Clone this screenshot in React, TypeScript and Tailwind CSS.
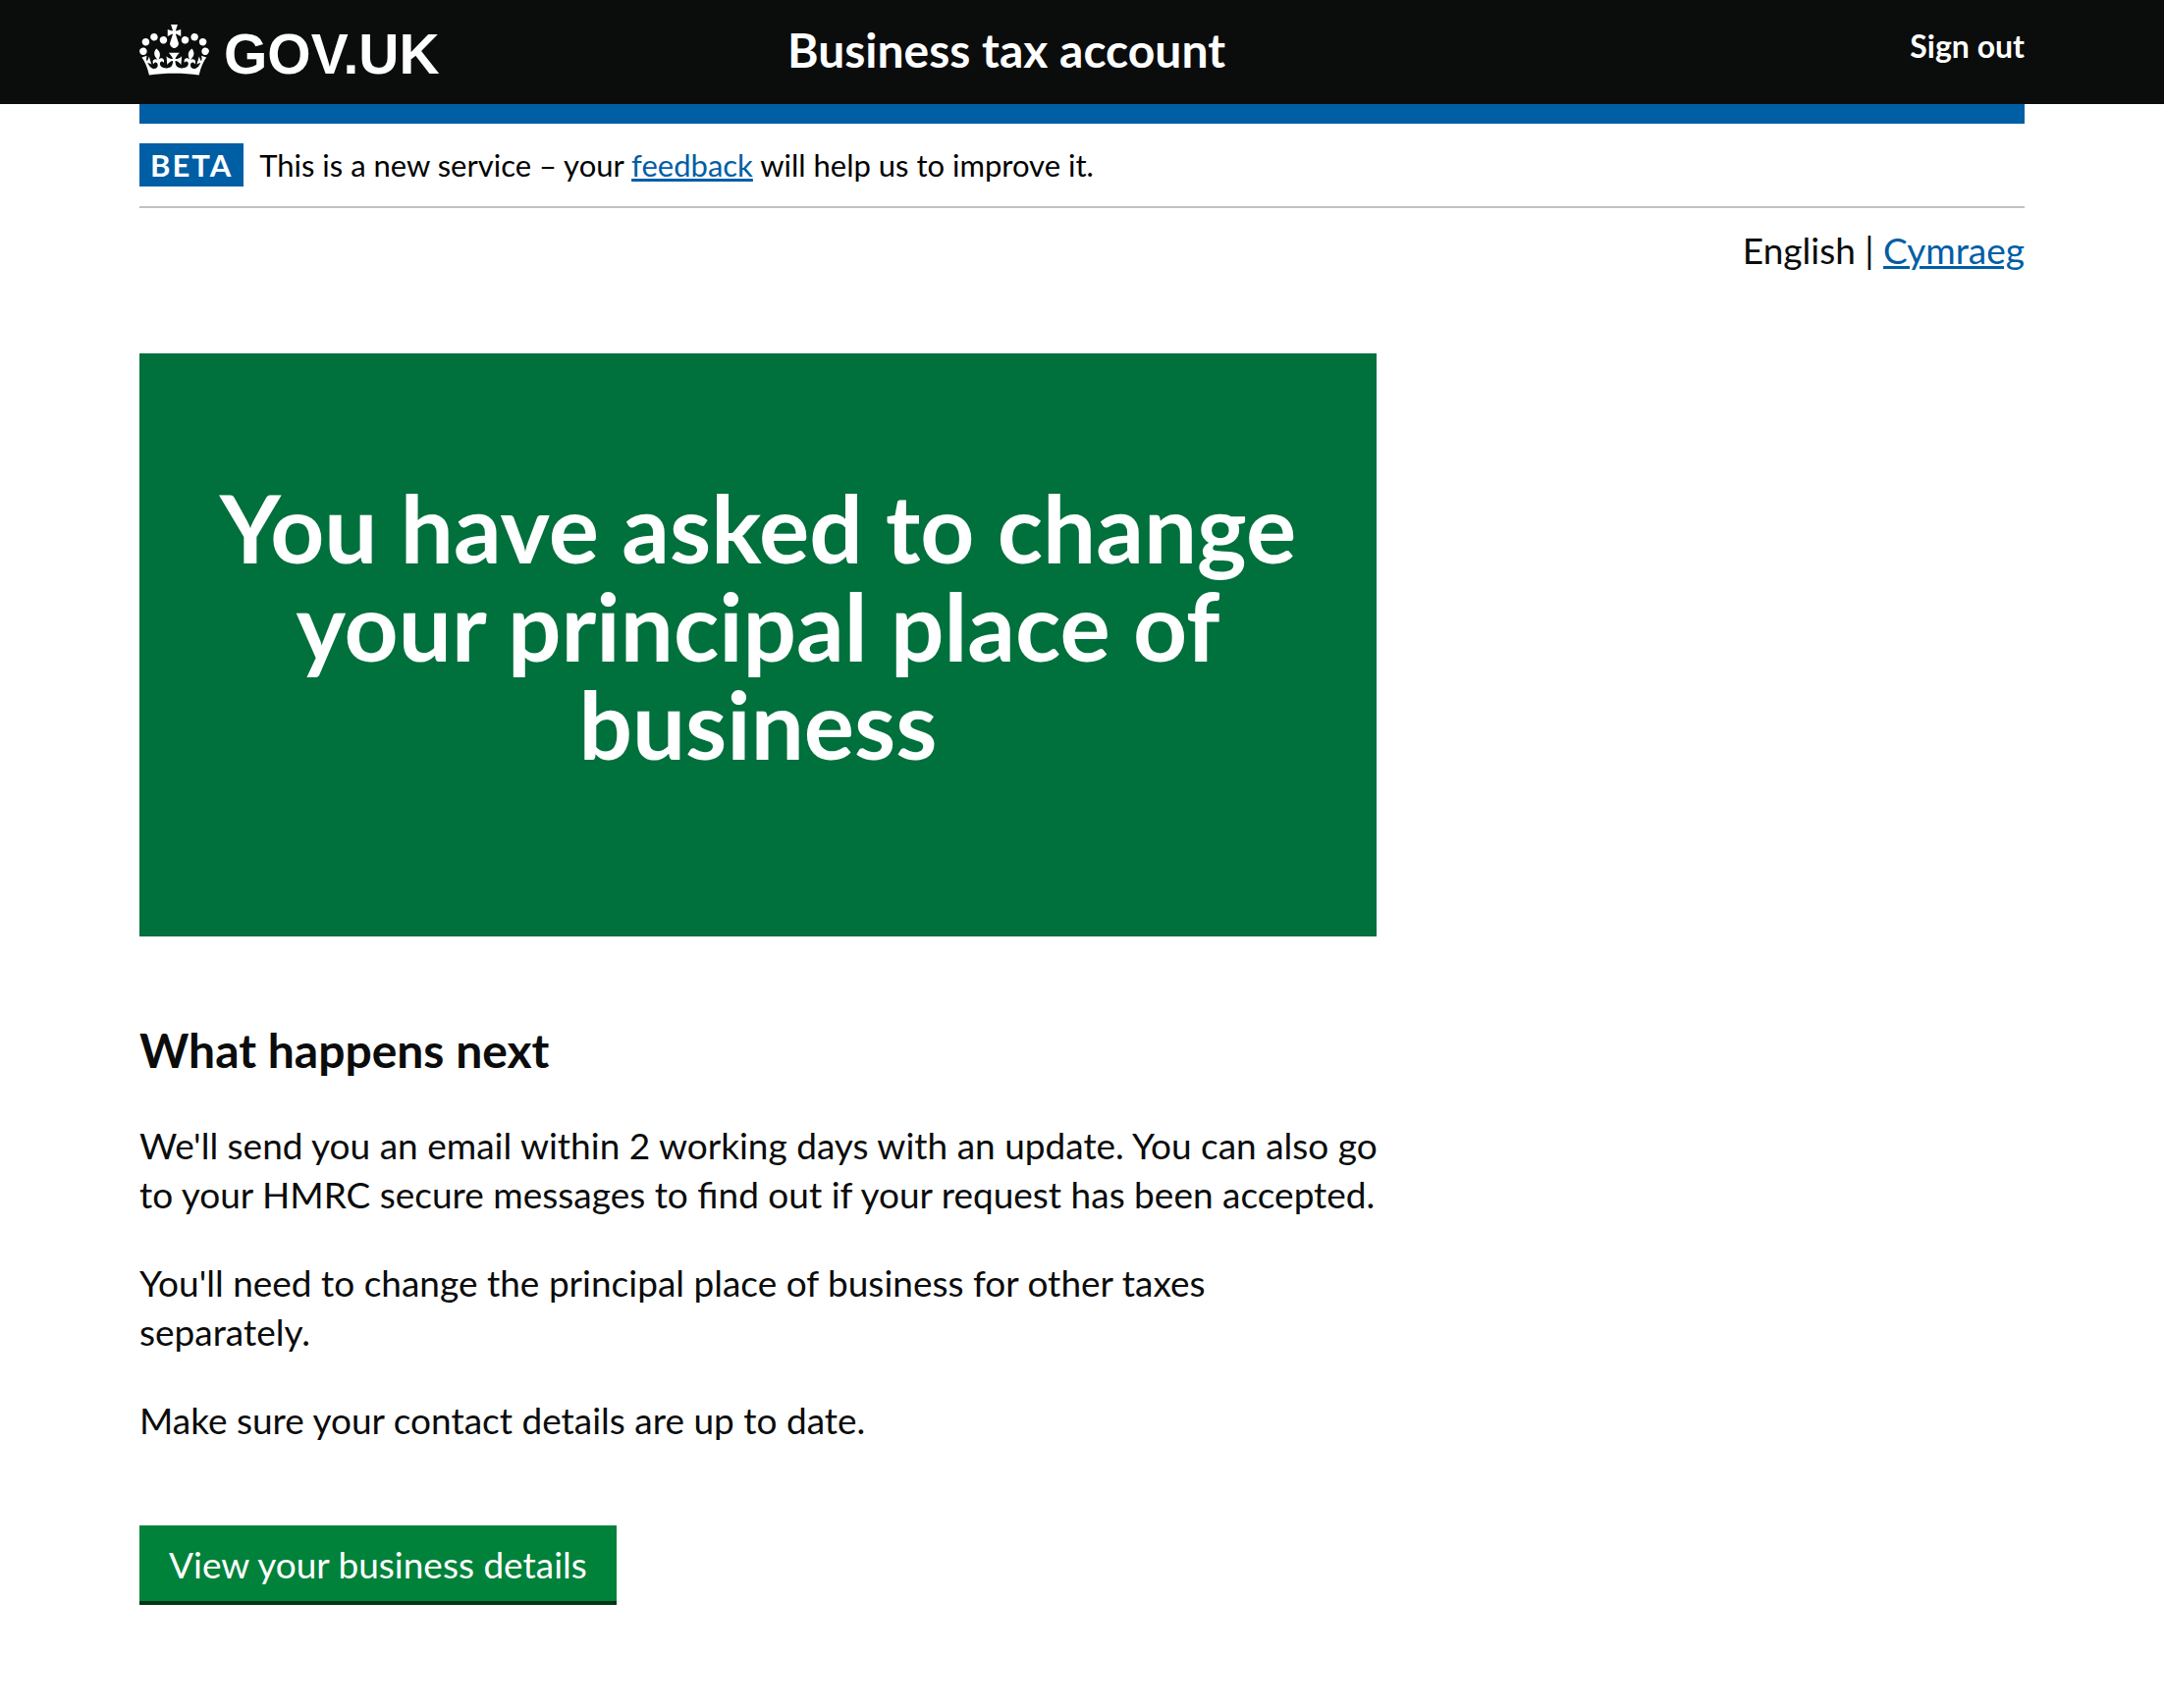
function Crown() {
  return (
    <svg aria-hidden="true" viewBox="0 0 132 97" className="h-[52px] w-[71px] shrink-0" fill="currentColor">
      <path
        fillRule="evenodd"
        d="M25 30.2c3.5 1.5 7.7-.2 9.1-3.7 1.5-3.6-.2-7.8-3.9-9.2-3.6-1.4-7.6.3-9.1 3.9-1.4 3.5.3 7.5 3.9 9zM9 39.5c3.6 1.5 7.8-.2 9.2-3.7 1.5-3.6-.2-7.8-3.9-9.1-3.6-1.5-7.6.2-9.1 3.8-1.4 3.5.3 7.5 3.8 9zM4.4 57.2c3.5 1.5 7.7-.2 9.1-3.8 1.5-3.6-.2-7.7-3.9-9.1-3.5-1.5-7.6.3-9.1 3.8-1.4 3.5.3 7.6 3.9 9.1zm38.3-21.4c3.5 1.5 7.7-.2 9.1-3.8 1.5-3.6-.2-7.7-3.9-9.1-3.6-1.5-7.6.3-9.1 3.8-1.3 3.6.4 7.7 3.9 9.1zm64.4-5.6c-3.6 1.5-7.8-.2-9.1-3.7-1.5-3.6.2-7.8 3.8-9.2 3.6-1.4 7.7.3 9.2 3.9 1.3 3.5-.4 7.5-3.9 9zm15.9 9.3c-3.6 1.5-7.7-.2-9.1-3.7-1.5-3.6.2-7.8 3.7-9.1 3.6-1.5 7.7.2 9.2 3.8 1.5 3.5-.3 7.5-3.8 9zm4.7 17.7c-3.6 1.5-7.8-.2-9.2-3.8-1.5-3.6.2-7.7 3.9-9.1 3.6-1.5 7.7.3 9.2 3.8 1.3 3.5-.4 7.6-3.9 9.1zM89.3 35.8c-3.6 1.5-7.8-.2-9.2-3.8-1.4-3.6.2-7.7 3.9-9.1 3.6-1.5 7.7.3 9.2 3.8 1.4 3.6-.3 7.7-3.9 9.1zM69.7 17.7l8.9 4.7V9.3l-8.9 2.8c-.2-.3-.5-.6-.9-.9L72.4 0H59.6l3.5 11.2c-.3.3-.6.5-.9.9l-8.8-2.8v13.1l8.8-4.7c.3.3.6.7.9.9l-5 15.4v.1c-.2.8-.4 1.6-.4 2.4 0 4.1 3.1 7.5 7 8.1h.2c.3 0 .7.1 1 .1.4 0 .7 0 1-.1h.2c4-.6 7.1-4.1 7.1-8.1 0-.8-.1-1.7-.4-2.4V34l-5.1-15.4c.4-.2.7-.6 1-.9zM66 92.8c16.9 0 32.8 1.1 47.1 3.2 4-16.9 8.9-26.7 14-33.5l-9.6-3.4c1 4.9 1.1 7.2 0 10.2-1.5-1.4-3-4.3-4.2-8.7L108.6 76c2.8-2 5-3.2 7.5-3.3-4.4 9.4-10 11.9-13.6 11.2-4.3-.8-6.3-4.6-5.6-7.9 1-4.7 5.7-5.9 8-.5 4.3-8.7-3-11.4-7.6-8.8 7.1-7.2 7.9-13.5 2.1-21.1-8 6.1-8.1 12.3-4.5 20.8-4.7-5.4-12.1-2.5-9.5 6.2 3.4-5.2 7.9-2 7.2 3.1-.6 4.3-6.4 7.8-13.5 7.2-10.3-.9-10.9-8-11.2-13.8 2.5-.5 7.1 1.8 11 7.3L80.2 60c-4.1 4.4-8 5.3-12.3 5.4 1.4-4.4 8-11.6 8-11.6H55.5s6.4 7.2 7.9 11.6c-4.2-.1-8-1-12.3-5.4l1.4 16.4c3.9-5.5 8.5-7.7 10.9-7.3-.3 5.8-.9 12.8-11.1 13.8-7.2.6-12.9-2.9-13.5-7.2-.7-5 3.8-8.3 7.1-3.1 2.7-8.7-4.6-11.6-9.4-6.2 3.7-8.5 3.6-14.7-4.6-20.8-5.8 7.6-5 13.9 2.2 21.1-4.7-2.6-11.9.1-7.7 8.8 2.3-5.5 7.1-4.2 8.1.5.7 3.3-1.3 7.1-5.7 7.9-3.5.7-9-1.8-13.5-11.2 2.5.1 4.7 1.3 7.5 3.3l-4.7-15.4c-1.2 4.4-2.7 7.2-4.3 8.7-1.1-3-.9-5.3 0-10.2l-9.5 3.4c5 6.9 9.9 16.7 14 33.5 14.8-2.1 30.8-3.2 47.7-3.2z"
      />
    </svg>
  );
}

export default function App() {
  return (
    <div className="min-h-screen bg-white font-['Lato','Noto_Sans',sans-serif] text-[#0b0c0c]">
      <header className="bg-[#0b0c0c] text-white">
        <div className="mx-auto grid h-[106px] max-w-[1920px] grid-cols-[660px_1fr_auto] items-center pb-1">
          <a href="#" aria-label="GOV.UK" className="flex items-start gap-[15px] pt-2">
            <Crown />
            <span className="font-['Liberation_Sans',sans-serif] text-[57px] leading-[60px] font-bold">GOV.UK</span>
          </a>
          <a href="#" className="text-[48px] leading-[60px] font-bold">Business tax account</a>
          <a href="#" className="pb-2 text-[32px] leading-[40px] font-bold">Sign out</a>
        </div>
      </header>

      <div className="mx-auto max-w-[1920px]">
        <div className="h-5 bg-[#005ea5]" />
        <div className="flex items-center gap-4 border-b-2 border-[#bfc1c3] py-5 text-[31px] leading-[44px]">
          <strong className="bg-[#005ea5] px-[11px] tracking-[2px] text-white">BETA</strong>
          <span className="text-black">
            This is a new service – your{" "}
            <a href="#" className="text-[#005ea5] underline decoration-[3px]">feedback</a> will help us to improve it.
          </span>
        </div>
        <nav aria-label="Language" className="pt-[18px] text-right text-[37px] leading-[50px]">
          <span>English</span> | <a href="#" className="text-[#005ea5] underline decoration-[3px]">Cymraeg</a>
        </nav>

        <main className="max-w-[1264px] pt-20 text-[37px] leading-[50px]">
          <div className="max-w-[1260px] bg-[#00703c] px-[70px] pt-[127px] pb-[167px] text-center text-white">
            <h1 className="text-[96px] leading-[100px] font-bold">
              You have asked to change your principal place of business
            </h1>
          </div>
          <h2 className="mt-[86px] mb-[42px] text-[48px] leading-[60px] font-bold">What happens next</h2>
          <p className="mb-10">
            We'll send you an email within 2 working days with an update. You can also go to your HMRC secure messages to
            find out if your request has been accepted.
          </p>
          <p className="mb-10">
            You'll need to change the principal place of business for other taxes separately.
          </p>
          <p className="mb-[82px]">Make sure your contact details are up to date.</p>
          <button type="button" className="h-[77px] bg-[#00823b] px-[30px] pt-[2px] text-white shadow-[0_4px_0_#003618]">
            View your business details
          </button>
        </main>
      </div>
    </div>
  );
}
